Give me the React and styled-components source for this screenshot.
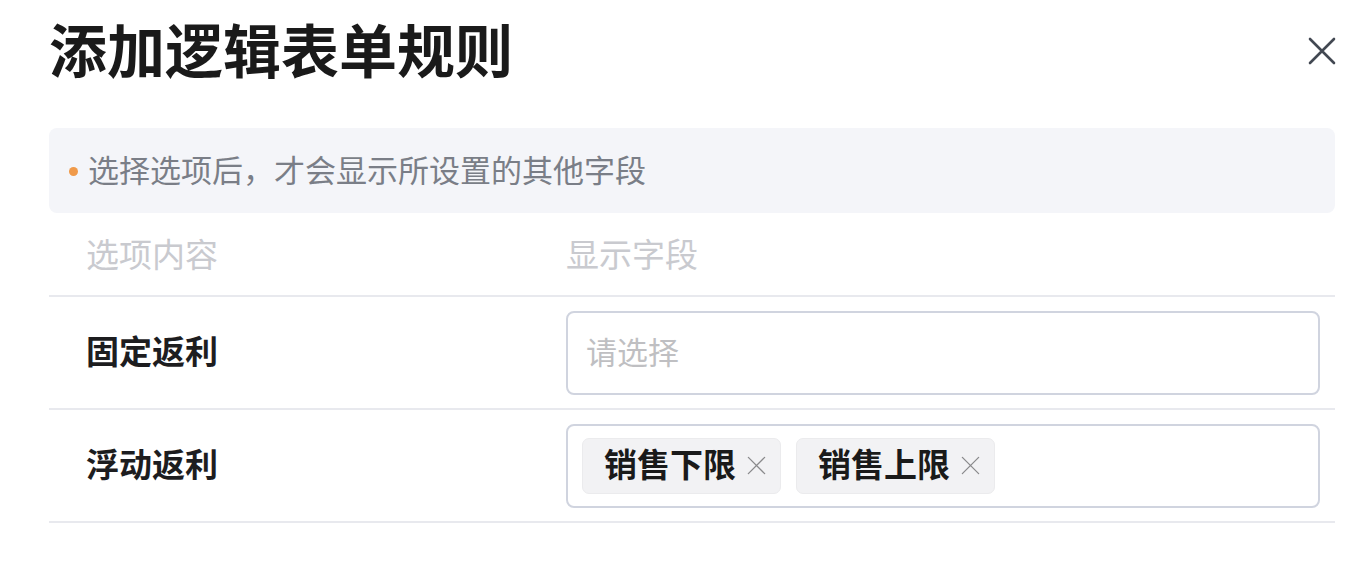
import React from 'react';
import styled, { createGlobalStyle } from 'styled-components';

const GlobalStyle = createGlobalStyle`
  html, body {
    margin: 0;
    padding: 0;
    background: #ffffff;
  }
  body {
    font-family: 'Noto Sans CJK SC', 'Noto Sans', sans-serif;
    color: #1a1a1a;
  }
`;

const Page = styled.div`
  padding: 0 36px 0 49px;
`;

const Header = styled.div`
  height: 106px;
  display: flex;
  align-items: center;
  justify-content: space-between;
`;

const Title = styled.h1`
  margin: 0;
  font-size: 58px;
  line-height: 1;
  font-weight: 700;
  color: #1a1a1a;
  transform: translateY(-5px);
`;

const CloseButton = styled.button`
  width: 28px;
  height: 28px;
  padding: 0;
  border: none;
  background: none;
  display: flex;
  cursor: pointer;
  transform: translateY(-2px);
`;

const Notice = styled.div`
  margin-top: 22px;
  margin-right: 1px;
  height: 85px;
  border-radius: 8px;
  background: #f4f5f9;
  display: flex;
  align-items: center;
  gap: 10px;
  padding-left: 20px;
`;

const Dot = styled.span`
  width: 9px;
  height: 9px;
  border-radius: 50%;
  background: #f09a4a;
  flex-shrink: 0;
  transform: translateY(1px);
`;

const NoticeText = styled.span`
  font-size: 31px;
  color: #7a7e87;
  line-height: 1;
  transform: translateY(-2px);
`;

const Table = styled.div`
  margin-right: 1px;
`;

const Row = styled.div`
  display: grid;
  grid-template-columns: 517px 1fr;
  align-items: center;
  height: ${p => p.$height}px;
  border-bottom: 2px solid #e8e9ee;
`;

const Cell = styled.div`
  display: flex;
  padding-left: ${p => p.$pad || 0}px;
  padding-right: ${p => p.$right || 0}px;
`;

const HeadText = styled.span`
  font-size: 33px;
  color: #c9cacf;
  line-height: 1;
  transform: translateY(-1px);
`;

const Label = styled.span`
  font-size: 33px;
  font-weight: 700;
  color: #1d1d1f;
  line-height: 1;
  transform: translateY(-2px);
`;

const SelectBox = styled.div`
  flex: 1;
  height: 84px;
  box-sizing: border-box;
  border: 2px solid #d0d4df;
  border-radius: 8px;
  display: flex;
  align-items: center;
  gap: 15px;
  padding-left: ${p => p.$pad}px;
`;

const Placeholder = styled.span`
  font-size: 31px;
  color: #bfbfc2;
  line-height: 1;
  transform: translateY(-2px);
`;

const Tag = styled.div`
  height: 56px;
  box-sizing: border-box;
  display: flex;
  align-items: center;
  gap: 11px;
  padding: 0 14px 0 21px;
  border-radius: 7px;
  background: #f2f2f4;
  border: 1px solid #ebebed;
`;

const TagText = styled.span`
  font-size: 33px;
  font-weight: 700;
  color: #1a1a1a;
  line-height: 1;
  transform: translateY(-2px);
`;

const TagClose = styled.span`
  display: flex;
  width: 19px;
  height: 19px;
`;

const CloseIcon = ({ size, stroke, color }) => (
  <svg width={size} height={size} viewBox="0 0 28 28" fill="none">
    <path d="M2 2L26 26M26 2L2 26" stroke={color} strokeWidth={stroke} strokeLinecap="round" />
  </svg>
);

const rows = [
  { label: '固定返利', tags: [] },
  { label: '浮动返利', tags: ['销售下限', '销售上限'] },
];

export default function App() {
  return (
    <Page>
      <GlobalStyle />
      <Header>
        <Title>添加逻辑表单规则</Title>
        <CloseButton>
          <CloseIcon size={28} stroke={2.6} color="#424852" />
        </CloseButton>
      </Header>

      <Notice>
        <Dot />
        <NoticeText>选择选项后，才会显示所设置的其他字段</NoticeText>
      </Notice>

      <Table>
        <Row $height={82}>
          <Cell $pad={37}><HeadText>选项内容</HeadText></Cell>
          <Cell><HeadText>显示字段</HeadText></Cell>
        </Row>
        {rows.map((row) => (
          <Row key={row.label} $height={111}>
            <Cell $pad={37}><Label>{row.label}</Label></Cell>
            <Cell $right={15}>
              {row.tags.length === 0 ? (
                <SelectBox $pad={18}>
                  <Placeholder>请选择</Placeholder>
                </SelectBox>
              ) : (
                <SelectBox $pad={14}>
                  {row.tags.map((tag) => (
                    <Tag key={tag}>
                      <TagText>{tag}</TagText>
                      <TagClose>
                        <CloseIcon size={19} stroke={1.9} color="#8a8a8c" />
                      </TagClose>
                    </Tag>
                  ))}
                </SelectBox>
              )}
            </Cell>
          </Row>
        ))}
      </Table>
    </Page>
  );
}
